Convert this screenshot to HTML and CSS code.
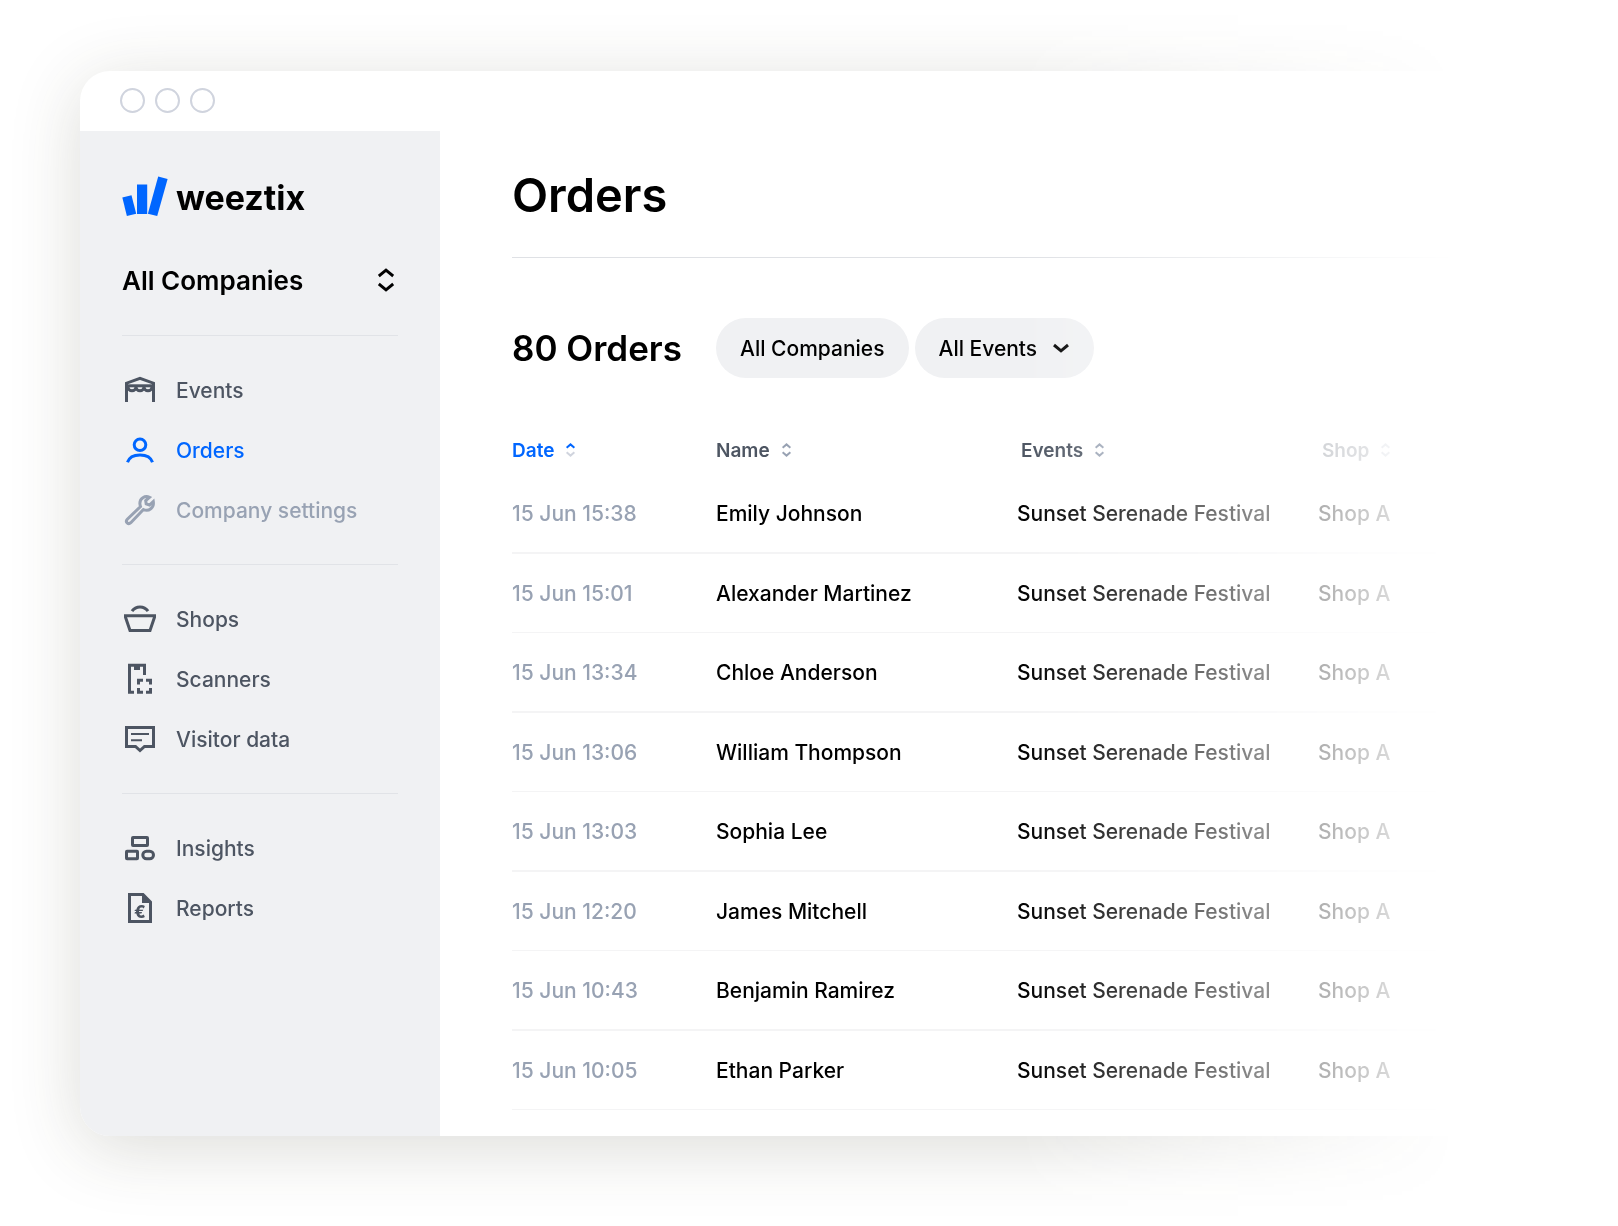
FILE: index.html
```html
<!DOCTYPE html>
<html lang="en">

<head>
  <meta charset="UTF-8">
  <meta name="viewport" content="width=device-width, initial-scale=1.0">
  <title>Orders - weeztix</title>
  <link rel="stylesheet" href="styles.css">
</head>

<body>
  <div class="stage">
    <div class="window">

      <div class="titlebar">
        <span class="dot"></span>
        <span class="dot"></span>
        <span class="dot"></span>
      </div>

      <div class="layout">

        <!-- sidebar -->
        <aside class="sidebar">
          <a class="logo" href="#">
            <svg width="46" height="40" viewBox="0 0 46 40" fill="#0066ff">
              <path d="M0.300 21.500L9.500 19.200L14.200 37.800L4.900 40z" />
              <path d="M15 8.500H25.200V38H15z" />
              <path d="M36.200 0.600L45.600 3L35.200 40L25.900 37.800z" />
            </svg>
            <span class="logo-text">weeztix</span>
          </a>

          <button class="company" type="button">
            All Companies
            <svg width="16" height="24" viewBox="0 0 16 24" class="line">
              <path d="M0.800 8L8 2.200L15.200 8M0.800 16L8 21.800L15.200 16" />
            </svg>
          </button>

          <nav>
            <ul class="group">
              <li><a class="item" href="#">
                <svg class="icon" viewBox="0 0 32 32">
                  <path d="M2.500 28V9.200L16 4.300L29.500 9.200V28" />
                  <path d="M3 11.800H29" />
                  <path d="M4 13a4 3.800 0 0 0 8 0a4 3.800 0 0 0 8 0a4 3.800 0 0 0 8 0" />
                </svg>
                Events</a></li>
              <li><a class="item active" href="#">
                <svg class="icon" viewBox="0 0 32 32">
                  <circle cx="16" cy="10.800" r="5.800" />
                  <path d="M3.500 28.300C5.200 23 10 20.900 16 20.900S26.800 23 28.500 28.300" />
                </svg>
                Orders</a></li>
              <li><a class="item muted" href="#">
                <svg class="icon" viewBox="0 0 32 32">
                  <path d="M25.500 3.300C21 1 15.600 4.500 15.900 9.600C16 10.800 16.200 11.800 16.500 12.600L3.300 25.200C0.900 27.800 4.200 31.100 6.800 28.700L19.400 15.500C24.800 18 30.300 13.600 29.300 7.500L25.500 11L22.200 9.800L21.700 6.600z" />
                </svg>
                Company settings</a></li>
            </ul>

            <ul class="group">
              <li><a class="item" href="#">
                <svg class="icon" viewBox="0 0 32 32">
                  <path d="M1 12.800H31L26 27.500H6z" />
                  <path d="M8 8.200C10 5.200 12.500 3.900 16 3.900S22 5.200 24 8.200" />
                </svg>
                Shops</a></li>
              <li><a class="item" href="#">
                <svg class="icon" viewBox="0 0 32 32">
                  <path d="M10 29.300H5.500V2.300H20.500V12" />
                  <path d="M10 3h6v4h-6z" class="solid" />
                  <path d="M14.500 21.500V17.200H19M22 17.200H26.500V21.500M26.500 25V29.300H22M19 29.300H14.500V25" />
                </svg>
                Scanners</a></li>
              <li><a class="item" href="#">
                <svg class="icon" viewBox="0 0 32 32">
                  <path d="M2.500 4.500H29.500V23.500H20.500L16 27.500L11.500 23.500H2.500z" />
                  <path d="M7 11H25M7 17.300H18" class="thin" />
                </svg>
                Visitor data</a></li>
            </ul>

            <ul class="group">
              <li><a class="item" href="#">
                <svg class="icon" viewBox="0 0 32 32">
                  <rect x="8.500" y="5.500" width="15" height="8" rx="0.500" />
                  <rect x="2.500" y="19.200" width="11" height="7.500" rx="0.500" />
                  <rect x="18.800" y="19.200" width="10.700" height="7.500" rx="3.750" />
                </svg>
                Insights</a></li>
              <li><a class="item" href="#">
                <svg class="icon" viewBox="0 0 32 32">
                  <path d="M5.500 2.500H19L26.500 10V29.500H5.500z" />
                  <path d="M18 2L27 11H18z" class="solid" />
                  <text x="16" y="26" class="euro">€</text>
                </svg>
                Reports</a></li>
            </ul>
          </nav>
        </aside>

        <!-- orders list -->
        <main class="main">
          <header class="page-header">
            <h1>Orders</h1>
          </header>

          <div class="filters">
            <h2>80 Orders</h2>
            <button class="pill" type="button">All Companies</button>
            <button class="pill" type="button">
              All Events
              <svg width="18" height="12" viewBox="0 0 18 12" class="line">
                <path d="M2 3L9 8.800L16 3" />
              </svg>
            </button>
          </div>

          <table>
            <colgroup>
              <col class="col-date">
              <col class="col-wide">
              <col class="col-wide">
              <col>
            </colgroup>
            <thead>
              <tr>
                <th><button class="sort sorted" type="button">Date
                  <svg width="9" height="14" viewBox="0 0 9 14"><path class="up" d="M0.600 4.700L4.500 1.400L8.400 4.700" /><path class="down" d="M0.600 9.300L4.500 12.600L8.400 9.300" /></svg></button></th>
                <th><button class="sort" type="button">Name
                  <svg width="9" height="14" viewBox="0 0 9 14"><path class="up" d="M0.600 4.700L4.500 1.400L8.400 4.700" /><path class="down" d="M0.600 9.300L4.500 12.600L8.400 9.300" /></svg></button></th>
                <th class="inset"><button class="sort" type="button">Events
                  <svg width="9" height="14" viewBox="0 0 9 14"><path class="up" d="M0.600 4.700L4.500 1.400L8.400 4.700" /><path class="down" d="M0.600 9.300L4.500 12.600L8.400 9.300" /></svg></button></th>
                <th class="inset light"><button class="sort" type="button">Shop
                  <svg width="9" height="14" viewBox="0 0 9 14"><path class="up" d="M0.600 4.700L4.500 1.400L8.400 4.700" /><path class="down" d="M0.600 9.300L4.500 12.600L8.400 9.300" /></svg></button></th>
              </tr>
            </thead>
            <tbody>
              <tr>
                <td class="date">15 Jun 15:38</td>
                <td>Emily Johnson</td>
                <td>Sunset Serenade Festival</td>
                <td>Shop A</td>
              </tr>
              <tr>
                <td class="date">15 Jun 15:01</td>
                <td>Alexander Martinez</td>
                <td>Sunset Serenade Festival</td>
                <td>Shop A</td>
              </tr>
              <tr>
                <td class="date">15 Jun 13:34</td>
                <td>Chloe Anderson</td>
                <td>Sunset Serenade Festival</td>
                <td>Shop A</td>
              </tr>
              <tr>
                <td class="date">15 Jun 13:06</td>
                <td>William Thompson</td>
                <td>Sunset Serenade Festival</td>
                <td>Shop A</td>
              </tr>
              <tr>
                <td class="date">15 Jun 13:03</td>
                <td>Sophia Lee</td>
                <td>Sunset Serenade Festival</td>
                <td>Shop A</td>
              </tr>
              <tr>
                <td class="date">15 Jun 12:20</td>
                <td>James Mitchell</td>
                <td>Sunset Serenade Festival</td>
                <td>Shop A</td>
              </tr>
              <tr>
                <td class="date">15 Jun 10:43</td>
                <td>Benjamin Ramirez</td>
                <td>Sunset Serenade Festival</td>
                <td>Shop A</td>
              </tr>
              <tr>
                <td class="date">15 Jun 10:05</td>
                <td>Ethan Parker</td>
                <td>Sunset Serenade Festival</td>
                <td>Shop A</td>
              </tr>
            </tbody>
          </table>
        </main>

      </div>
    </div>
  </div>
</body>

</html>
```
FILE: styles.css
```css
* {
  box-sizing: border-box;
  padding: 0;
  margin: 0;
}

body {
  font-family: Inter, "Liberation Sans", sans-serif;
  font-size: 21px;
  font-weight: 500;
  color: #000;
  background: #fff;
}

button {
  font: inherit;
  color: inherit;
  background: none;
  border: none;
  cursor: pointer;
}

a {
  color: inherit;
  text-decoration: none;
}

ul {
  list-style: none;
}

/* everything fades out to the right */
.stage {
  padding: 71px 80px 90px;
  -webkit-mask-image: linear-gradient(to right, #000 63%, transparent 90%);
  mask-image: linear-gradient(to right, #000 63%, transparent 90%);
}

.window {
  background: #fff;
  border-radius: 30px;
  box-shadow: 0 12px 70px rgba(60, 60, 40, .18);
  overflow: hidden;
}

.titlebar {
  height: 60px;
  padding: 0 40px 2px;
  display: flex;
  align-items: center;
  gap: 10px;
}

.dot {
  width: 25px;
  height: 25px;
  border: 2px solid #d0d4de;
  border-radius: 50%;
}

.layout {
  display: flex;
}

/* sidebar ----------------------------------- */
.sidebar {
  flex: none;
  width: 360px;
  padding: 45px 42px;
  background: #f0f1f3;
}

.logo {
  display: flex;
  align-items: center;
  gap: 8px;
  height: 40px;
}

.logo-text {
  padding-top: 4px;
  font-size: 34px;
  font-weight: 700;
  line-height: 40px;
}

.company {
  display: flex;
  align-items: center;
  justify-content: space-between;
  width: 100%;
  height: 60px;
  margin: 34px 0 25px;
  padding-right: 4px;
  font-size: 26px;
  font-weight: 600;
}

.line {
  fill: none;
  stroke: currentColor;
  stroke-width: 3;
}

.group {
  padding: 24px 0;
  border-top: 1px solid #e1e3e7;
}

.item {
  display: flex;
  align-items: center;
  gap: 20px;
  height: 60px;
  padding-left: 2px;
  color: #4d5562;
}

.item.active {
  color: #0066ff;
}

.item.muted {
  color: #98a2b3;
}

.icon {
  width: 32px;
  height: 32px;
  fill: none;
  stroke: currentColor;
  stroke-width: 3;
}

.icon .thin {
  stroke-width: 2;
}

.icon .solid {
  fill: currentColor;
  stroke: none;
}

.icon .euro {
  fill: currentColor;
  stroke: none;
  font-size: 17px;
  font-weight: 800;
  text-anchor: middle;
}

/* main ----------------------------------- */
.main {
  flex: 1;
  min-width: 0;
  padding: 34px 0 26px 72px;
}

.page-header {
  padding-bottom: 32px;
  border-bottom: 1px solid #dfe1e5;
}

h1 {
  font-size: 47px;
  font-weight: 600;
  line-height: 60px;
}

.filters {
  display: flex;
  align-items: center;
  gap: 6px;
  margin: 60px 0 48px;
}

h2 {
  width: 198px;
  font-size: 35px;
  font-weight: 600;
  white-space: nowrap;
}

.pill {
  display: flex;
  align-items: center;
  gap: 15px;
  height: 60px;
  padding: 0 24px;
  background: #f0f1f3;
  border-radius: 30px;
}

table {
  width: 100%;
  table-layout: fixed;
  border-collapse: separate;
  border-spacing: 0;
  text-align: left;
}

.col-date {
  width: 204px;
}

.col-wide {
  width: 301px;
}

th {
  height: 48px;
  color: #4d5562;
}

th.inset {
  padding-left: 4px;
}

th.light {
  opacity: .8;
}

.sort {
  display: flex;
  align-items: center;
  gap: 12px;
  font-size: 19px;
  font-weight: 600;
}

.sort svg {
  fill: none;
  stroke: #98a2b3;
  stroke-width: 2;
}

.sorted {
  color: #0066ff;
}

.sorted .up {
  stroke: #0066ff;
}

.sorted .down {
  stroke: #d0d4de;
}

td {
  height: 80px;
  border-bottom: 2px solid #f4f4f5;
  white-space: nowrap;
}

tr:nth-child(even) td {
  height: 79px;
  border-bottom-width: 1px;
}

.date {
  color: #98a2b3;
}
```
